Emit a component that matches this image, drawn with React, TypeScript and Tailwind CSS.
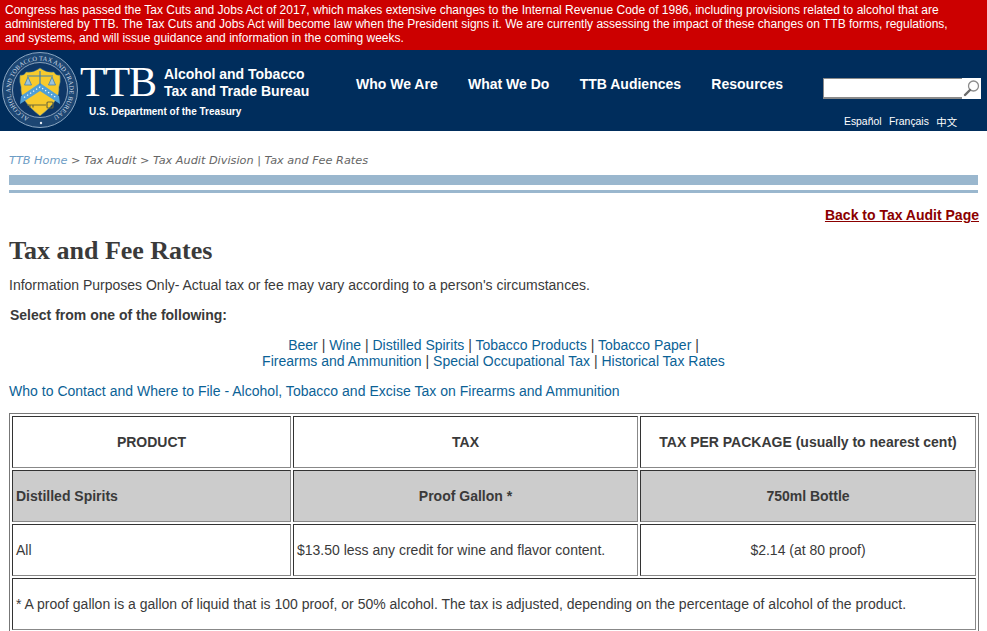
import React from "react";

const arial = "font-['Liberation_Sans',Arial,sans-serif]";

const Seal: React.FC = () => (
  <svg width="76" height="76" viewBox="0 0 76 76" className="shrink-0">
    <circle cx="38" cy="38" r="37.5" fill="#1c4673" stroke="#8aa6c1" strokeWidth="1" />
    <circle cx="38" cy="38" r="27.5" fill="#0e3767" stroke="#a9bdd0" strokeWidth="0.8" />
    <defs>
      <path id="sealRing" d="M 38 38 m -29.5 0 a 29.5 29.5 0 1 1 59 0 a 29.5 29.5 0 1 1 -59 0" />
    </defs>
    <text fontSize="6.4" fill="#d3dee8" fontFamily="Liberation Serif, serif" transform="rotate(-68 38 38)">
      <textPath href="#sealRing" textLength="160" lengthAdjust="spacing">ALCOHOL AND TOBACCO TAX AND TRADE BUREAU</textPath>
    </text>
    <circle cx="39" cy="71" r="1.2" fill="#e8eef4" />
    <path d="M18 23 Q22 24 24 20 Q32 21 38 16 Q44 21 52 20 Q54 24 58 23 Q59 30 57 35 Q59 48 38 64 Q17 48 19 35 Q17 30 18 23 Z" fill="#f7ca2c" stroke="#2f6ea3" strokeWidth="0.5" />
    <path d="M19 44 L38 31 L57 44 L58 52 L38 39 L18 52 Z" fill="#4f9fd6" />
    <path d="M22 45.5 L38 35 L54 45.5" fill="none" stroke="#eef5fa" strokeWidth="1.2" strokeDasharray="1.4 2.2" />
    <path d="M25 24 H51 M38 19 V33" fill="none" stroke="#3f7fb0" strokeWidth="1.2" />
    <path d="M26 25 L22.5 33 H29.5 Z M50 25 L46.5 33 H53.5 Z" fill="#9cc4dc" stroke="#3f7fb0" strokeWidth="0.8" />
    <path d="M25 53 H44 M28 53 v2.5 M31 53 v2.5" fill="none" stroke="#6f6a3a" strokeWidth="1.2" />
    <rect x="45" y="50" width="6" height="6" rx="1" fill="none" stroke="#6f6a3a" strokeWidth="1.2" />
  </svg>
);

const Banner: React.FC = () => (
  <div className="h-[50px] bg-[#cc0000] pl-[5px] pr-[20px] pt-[3px] text-[12px] leading-[14px] text-white">
    Congress has passed the Tax Cuts and Jobs Act of 2017, which makes extensive changes to the Internal Revenue Code of 1986, including provisions related to alcohol that are
    administered by TTB. The Tax Cuts and Jobs Act will become law when the President signs it. We are currently assessing the impact of these changes on TTB forms, regulations,
    and systems, and will issue guidance and information in the coming weeks.
  </div>
);

const Header: React.FC = () => (
  <div className="flex h-[81px] bg-[#002d5c] text-white">
    <div className="ml-[2px] mt-[2px]">
      <Seal />
    </div>
    <div className="ml-[2px] w-[230px]">
      <div className="flex items-start">
        <span className="w-[84px] pt-[10px] font-['Liberation_Serif',serif] text-[42px] leading-[44px] tracking-[-1.2px]">TTB</span>
        <div className="pt-[16px] text-[14px] font-bold leading-[17px]">
          <div>Alcohol and Tobacco</div>
          <div>Tax and Trade Bureau</div>
        </div>
      </div>
      <div className="ml-[9px] mt-[2px] text-[10px] font-bold leading-[12px]">U.S. Department of the Treasury</div>
    </div>
    <nav className="ml-[46px] flex h-[68px] items-center gap-[30.3px] text-[14px] font-bold">
      <span>Who We Are</span>
      <span>What We Do</span>
      <span>TTB Audiences</span>
      <span>Resources</span>
    </nav>
    <div className="ml-[40px] flex w-[158px] flex-col">
      <div className="mt-[28px] flex h-[21px] bg-white">
        <div className="w-[139px] border border-[#8a8a8a] border-b-2 border-r-0" />
        <svg width="19" height="20" viewBox="0 0 19 20" fill="none">
          <circle cx="11.5" cy="8" r="5" stroke="#8c8c8c" strokeWidth="1.3" />
          <path d="M8 12 L3 17" stroke="#6b6b6b" strokeWidth="2.4" strokeLinecap="round" />
        </svg>
      </div>
      <div className="ml-[21px] mt-[17px] flex gap-[7.5px] text-[10.4px] leading-[12px]">
        <span>Español</span>
        <span>Français</span>
        <span className="font-['Noto_Sans_CJK_TC',sans-serif]">中文</span>
      </div>
    </div>
  </div>
);

const td = "border border-[#888] border-l-[#333] border-t-[#333]";

const Main: React.FC = () => (
  <div className="px-[9px] text-[14px] leading-[16px] text-[#3a3a3a]">
    <div className="pt-[23px] font-['DejaVu_Sans',Verdana,sans-serif] text-[11.27px] italic leading-[14px] text-[#666]">
      <span className="text-[#6d9cc5]">TTB Home</span> &gt; Tax Audit &gt; Tax Audit Division | Tax and Fee Rates
    </div>
    <div className="mt-[7px] h-[10px] bg-[#9ab7ce]" />
    <div className="mt-[5px] h-[3px] bg-[#9ab7ce]" />
    <div className="-mr-[1px] mt-[14px] text-right font-bold text-[#8b0000] underline">Back to Tax Audit Page</div>
    <h1 className="mt-[14px] font-['Liberation_Serif',Georgia,serif] text-[26px] font-bold leading-[28px]">Tax and Fee Rates</h1>
    <p className="mt-[12px]">Information Purposes Only- Actual tax or fee may vary according to a person's circumstances.</p>
    <p className="ml-[1px] mt-[14px] font-bold">Select from one of the following:</p>
    <div className="mt-[14px] text-center text-[#0b6296]">
      <div>
        Beer <span className="text-[#3a3a3a]">|</span> Wine <span className="text-[#3a3a3a]">|</span> Distilled Spirits <span className="text-[#3a3a3a]">|</span> Tobacco Products <span className="text-[#3a3a3a]">|</span> Tobacco Paper <span className="text-[#3a3a3a]">|</span>
      </div>
      <div>
        Firearms and Ammunition <span className="text-[#3a3a3a]">|</span> Special Occupational Tax <span className="text-[#3a3a3a]">|</span> Historical Tax Rates
      </div>
    </div>
    <p className="mt-[14px] tracking-[0.02px] text-[#0b6296]">Who to Contact and Where to File - Alcohol, Tobacco and Excise Tax on Firearms and Ammunition</p>
    <table className="mt-[14px] w-[970px] table-fixed border-separate border-spacing-[2px] border border-[#777] border-b-0">
      <colgroup>
        <col className="w-[279px]" />
        <col className="w-[345px]" />
        <col />
      </colgroup>
      <tbody>
        <tr className="h-[52px] text-center font-bold">
          <td className={td}>PRODUCT</td>
          <td className={td}>TAX</td>
          <td className={td}>TAX PER PACKAGE (usually to nearest cent)</td>
        </tr>
        <tr className="h-[52px] bg-[#cccccc] font-bold">
          <td className={`${td} px-[3px]`}>Distilled Spirits</td>
          <td className={`${td} text-center`}>Proof Gallon *</td>
          <td className={`${td} text-center`}>750ml Bottle</td>
        </tr>
        <tr className="h-[52px]">
          <td className={`${td} px-[3px]`}>All</td>
          <td className={`${td} px-[3px]`}>$13.50 less any credit for wine and flavor content.</td>
          <td className={`${td} text-center`}>$2.14 (at 80 proof)</td>
        </tr>
        <tr className="h-[52px]">
          <td colSpan={3} className={`${td} px-[3px]`}>
            * A proof gallon is a gallon of liquid that is 100 proof, or 50% alcohol. The tax is adjusted, depending on the percentage of alcohol of the product.
          </td>
        </tr>
      </tbody>
    </table>
  </div>
);

export default function App() {
  return (
    <div className={`h-[631px] overflow-hidden bg-white ${arial}`}>
      <Banner />
      <Header />
      <Main />
    </div>
  );
}
